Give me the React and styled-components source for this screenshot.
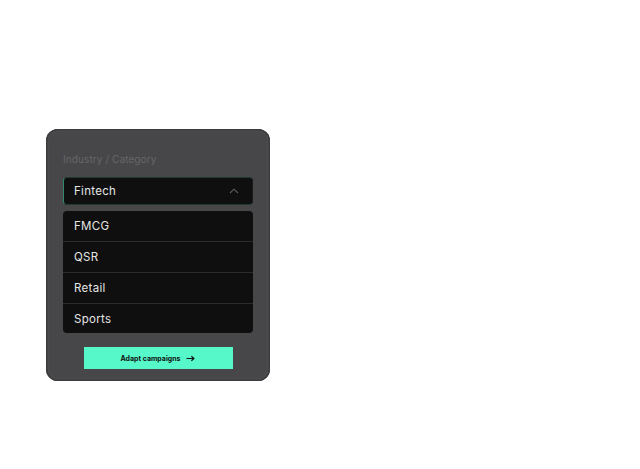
import React from "react";
import styled, { createGlobalStyle } from "styled-components";

const GlobalStyle = createGlobalStyle`
  html, body {
    margin: 0;
    padding: 0;
    background: #ffffff;
  }
  body {
    font-family: Inter, "Noto Sans", sans-serif;
  }
`;

const options = ["FMCG", "QSR", "Retail", "Sports"];

const App = () => {
  return (
    <>
      <GlobalStyle />
      <Page>
        <Card>
          <Label>Industry / Category</Label>
          <Trigger>
            <span>Fintech</span>
            <svg width="10" height="6" viewBox="0 0 10 6" fill="none">
              <path d="M1 5 L5 1.2 L9 5" stroke="#5c5c5e" strokeWidth="1.1" />
            </svg>
          </Trigger>
          <List>
            {options.map((opt, idx) => (
              <Item key={opt} $last={idx === options.length - 1}>
                {opt}
              </Item>
            ))}
          </List>
          <Button>
            Adapt campaigns
            <svg width="9" height="7" viewBox="0 0 10 7" fill="none">
              <path d="M0.5 3.5 H8.5 M6 1 L8.8 3.5 L6 6" stroke="#111" strokeWidth="1.3" />
            </svg>
          </Button>
        </Card>
      </Page>
    </>
  );
};

const Page = styled.div`
  width: 640px;
  height: 469px;
  padding: 129px 0 0 46px;
  box-sizing: border-box;
`;

const Card = styled.div`
  width: 224px;
  height: 252px;
  box-sizing: border-box;
  padding: 23px 17px 0 17px;
  background: #474749;
  border-radius: 12px;
  box-shadow: inset 0 0 0 1.5px #3d3d3f, inset 0 0 0 3px #4b4b4d;
  display: flex;
  flex-direction: column;
`;

const Label = styled.div`
  font-size: 10px;
  line-height: 14px;
  color: #666668;
  letter-spacing: 0.1px;
  margin-bottom: 11px;
`;

const Trigger = styled.div`
  height: 28px;
  box-sizing: border-box;
  background: #0f0f0f;
  border-radius: 4px;
  border: 1px solid #1c1c1c;
  border-left-color: #2f8a6c;
  border-top-color: #1f3a31;
  border-bottom-color: #1f3a31;
  display: flex;
  align-items: center;
  justify-content: space-between;
  padding: 0 13px 0 10px;
  font-size: 11.5px;
  color: #e6e6e6;
  letter-spacing: 0.3px;
`;

const List = styled.div`
  margin-top: 6px;
  background: #0f0f0f;
  border-radius: 4px;
  overflow: hidden;
`;

const Item = styled.div`
  height: ${(p) => (p.$last ? "29px" : "31px")};
  box-sizing: border-box;
  display: flex;
  align-items: center;
  padding-left: 11px;
  font-size: 11.5px;
  color: #e6e6e6;
  letter-spacing: 0.3px;
  border-bottom: ${(p) => (p.$last ? "none" : "1px solid #2c2c2c")};
`;

const Button = styled.div`
  margin: 14px auto 0 auto;
  width: 149px;
  height: 22px;
  background: #56f7c9;
  display: flex;
  align-items: center;
  justify-content: center;
  gap: 6px;
  font-size: 7px;
  font-weight: 700;
  color: #111111;
  letter-spacing: 0px;
`;

export default App;
